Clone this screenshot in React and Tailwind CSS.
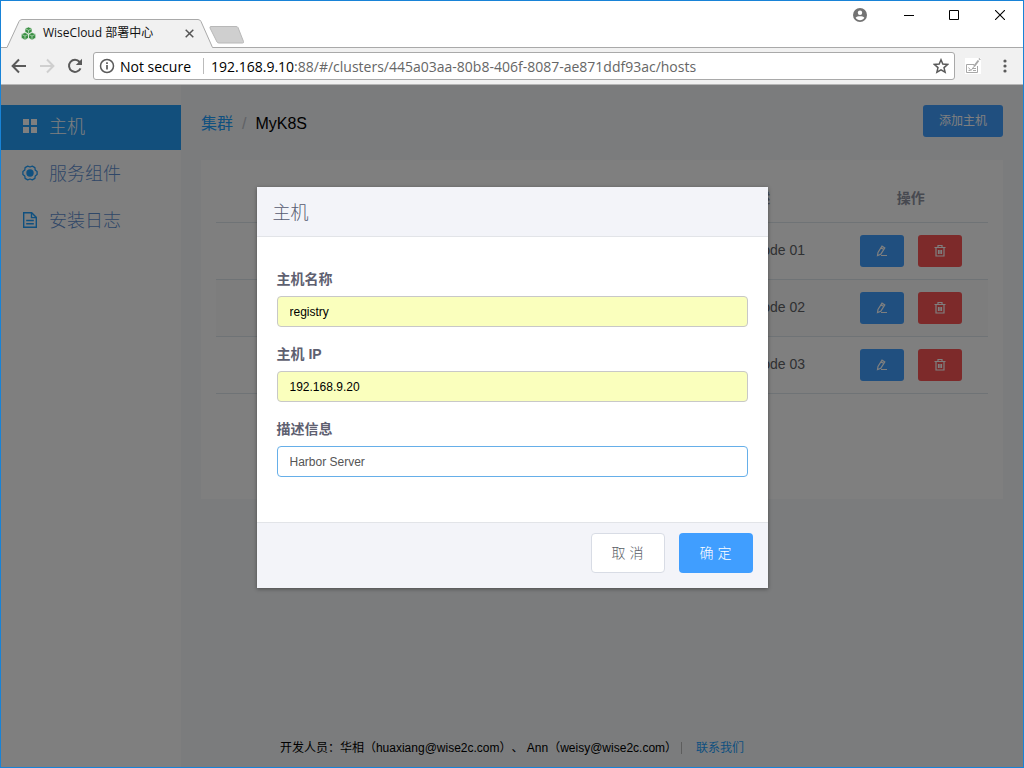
import React from "react";

const rows = [
  { name: "k8s-01", ip: "192.168.9.11", desc: "Master node 01" },
  { name: "k8s-02", ip: "192.168.9.12", desc: "Master node 02" },
  { name: "k8s-03", ip: "192.168.9.13", desc: "Master node 03" },
];

function GridIcon() {
  return (
    <svg className="mb-1" width="16" height="16" viewBox="0 0 16 16" fill="currentColor" aria-hidden="true">
      <path d="M1 1h6v6H1zM9 1h6v6H9zM1 9h6v6H1zM9 9h6v6H9z" />
    </svg>
  );
}

function ComponentIcon() {
  return (
    <svg className="mb-1" width="16" height="16" viewBox="0 0 16 16" fill="none" stroke="currentColor" strokeWidth="1.3" strokeLinejoin="round" aria-hidden="true">
      <path d="M15.1 6.5V9.500L13.200 11 12.900 13.400 10.300 14.900 8 14 5.700 14.900 3.100 13.400 2.800 11 .9 9.500V6.500L2.800 5 3.100 2.600 5.700 1.100 8 2 10.300 1.100 12.900 2.600 13.200 5z" />
      <circle cx="8" cy="8" r="3.700" fill="currentColor" stroke="none" />
    </svg>
  );
}

function DocIcon() {
  return (
    <svg className="mb-1" width="16" height="16" viewBox="0 0 16 16" fill="none" stroke="currentColor" strokeWidth="1.4" aria-hidden="true">
      <path d="M1.700.8h8l4.600 4.600v9.800H1.700z" />
      <path d="M9.500 1v4.600H14M4.200 8.500h7.600M4.200 11.700h7.600" />
    </svg>
  );
}

function EditIcon() {
  return (
    <svg width="12" height="12" viewBox="0 0 12 12" fill="none" stroke="currentColor" strokeWidth="1.2" aria-hidden="true">
      <path d="M1.500 10.500 2 7.500 6 1.200 8.800 3 4.800 9.200zM5 2.800 7.800 4.600M5 10.500h6" />
    </svg>
  );
}

function TrashIcon() {
  return (
    <svg width="12" height="12" viewBox="0 0 12 12" fill="none" stroke="currentColor" strokeWidth="1.2" aria-hidden="true">
      <path d="M.5 2.500h11M4 2.500v-2h4v2M2 2.500v8.500h8V2.500M4.500 5v4M6 5v4M7.500 5v4" />
    </svg>
  );
}

function BrowserChrome() {
  return (
    <header className="flex flex-col">
      <div className="flex h-[47px] justify-between border-b border-[#a9a9a9] bg-white">
        <div className="flex flex-1 items-end">
          <div className="relative flex h-7 w-[212px] items-center pl-5">
            <svg className="absolute left-0 top-0" width="212" height="29" viewBox="0 0 212 29" aria-hidden="true">
              <path d="M6 29V28.500L18 2.500Q19 .5 21 .5H197Q199 .5 200 2.500L211.500 28.500V29z" fill="#f1f1f1" />
              <path d="M0 28.500h6L18 2.500Q19 .5 21 .5H197Q199 .5 200 2.500L211.500 28.500" fill="none" stroke="#a9a9a9" />
            </svg>
            <svg className="relative" width="15" height="13" viewBox="0 0 15 13" aria-hidden="true">
              <g fill="#3a8f43" stroke="#f1f1f1" strokeWidth=".6">
                <path d="M7.500 0 11 1.500v3.500L7.500 7 4 5V1.500zM4 5.500 7.500 7v4L4 13 .3 11V7zM11 5.500 14.700 7v4L11 13 7.500 11V7z" />
                <path d="M4 1.600 7.500 3.300 11 1.600M.5 7.300 4 9l3.500-1.700L11 9l3.500-1.700M7.500 3.300V6M4 9v3M11 9v3" fill="none" stroke="#d9eeda" />
              </g>
            </svg>
            <span className="relative ml-[7px] flex-1 font-['Open_Sans','Noto_Sans_CJK_SC',sans-serif] text-[12px] text-[#111]">WiseCloud 部署中心</span>
            <button aria-label="关闭标签页" className="relative mr-4 flex size-4 items-center justify-center text-[#555]">
              <svg width="9" height="9" viewBox="0 0 9 9" stroke="currentColor" strokeWidth="1.500"><path d="m.7.700 7.600 7.600M8.300.7.700 8.300" /></svg>
            </button>
          </div>
          <button aria-label="新标签页" className="-ml-1 mb-[3px]">
            <svg width="36" height="18" viewBox="0 0 36 18"><path d="M2 .5h25q1.500 0 2 1l5.500 14q.5 1.500-1 1.500H10q-1.500 0-2-1L1 2Q.5.500 2 .5z" fill="#cfcfcf" stroke="#b8b8b8" /></svg>
          </button>
        </div>
        <div className="flex h-7 items-center text-black">
          <button aria-label="用户" className="mr-[29px] flex w-8 justify-center">
            <svg width="14" height="14" viewBox="0 0 14 14"><circle cx="7" cy="7" r="7" fill="#737373" /><circle cx="7" cy="4.800" r="2.200" fill="#fff" /><path d="M2.600 9.800C3.500 8.600 5.200 8.200 7 8.200s3.500.4 4.400 1.600C10.500 11.400 8.900 12.200 7 12.200S3.500 11.400 2.600 9.800z" fill="#fff" /></svg>
          </button>
          <button aria-label="最小化" className="flex w-[7px] justify-center">
            <svg className="shrink-0" width="10" height="10" viewBox="0 0 10 10"><path d="M0 5.500h10" stroke="currentColor" /></svg>
          </button>
          <button aria-label="最大化" className="ml-[19px] flex w-[46px] justify-center">
            <svg width="10" height="10" viewBox="0 0 10 10"><path d="M.5.500h9v9h-9z" fill="none" stroke="currentColor" /></svg>
          </button>
          <button aria-label="关闭" className="flex w-[46px] justify-center">
            <svg width="10" height="10" viewBox="0 0 10 10"><path d="m0 0 10 10M10 0 0 10" stroke="currentColor" strokeWidth="1.100" /></svg>
          </button>
        </div>
      </div>
      <div className="flex h-[37px] items-center border-b border-[#b6b6b6] bg-[#f1f1f1] pl-[10px] pr-2 font-['Open_Sans',sans-serif] text-[#5a5a5a]">
        <button aria-label="后退" className="w-7">
          <svg width="16" height="16" viewBox="0 0 16 16" fill="none" stroke="currentColor" strokeWidth="2"><path d="M15 8H2M8 1.500 1.600 8 8 14.500" /></svg>
        </button>
        <button aria-label="前进" className="w-7 text-[#cfcfcf]">
          <svg width="16" height="16" viewBox="0 0 16 16" fill="none" stroke="currentColor" strokeWidth="2"><path d="M1 8h13M8 1.500 14.400 8 8 14.500" /></svg>
        </button>
        <button aria-label="刷新" className="w-[26px]">
          <svg width="16" height="16" viewBox="0 0 16 16" fill="none" stroke="currentColor" strokeWidth="2"><path d="M13.500 10.300A6 6 0 1 1 12.600 4L14 5.500" /><path d="M15 .8v6.200H8.800z" fill="currentColor" stroke="none" /></svg>
        </button>
        <div className="flex h-7 flex-1 items-center rounded-[3px] border border-[#a9a9a9] bg-white px-[5px] text-[14px]">
          <svg width="16" height="16" viewBox="0 0 16 16" fill="none" stroke="currentColor" strokeWidth="1.500"><circle cx="8" cy="8" r="6.500" /><path d="M8 7v4.500M8 4.200V6" strokeWidth="1.700" /></svg>
          <span className="ml-[5px] whitespace-nowrap text-black">Not secure</span>
          <span className="ml-3 mr-[7px] h-4 w-px bg-[#bbb]" />
          <label htmlFor="url" className="whitespace-nowrap text-black">192.168.9.10</label>
          <input id="url" defaultValue=":88/#/clusters/445a03aa-80b8-406f-8087-ae871ddf93ac/hosts" className="h-5 min-w-0 flex-1 text-[#666] outline-none" />
          <button aria-label="收藏">
            <svg width="16" height="16" viewBox="0 0 16 16" fill="none" stroke="currentColor" strokeWidth="1.500"><path d="m8 1.800 1.800 4.300 4.700.4L11 9.600l1.100 4.600L8 11.800l-4.100 2.400L5 9.600 1.500 6.500l4.700-.4z" /></svg>
          </button>
        </div>
        <button aria-label="扩展程序" className="ml-[10px] w-4 bg-white text-[#a8a8a8]">
          <svg width="16" height="16" viewBox="0 0 16 16" fill="none" stroke="currentColor"><path d="M9 6.500H1.500v8h11V8M3.500 9.500l2.500 3 3-4M3.500 12.500h2M8 12.500h3M8 10.500h3" /><path d="M9 8.500 13.500 2.500M14.200 1.600 15 .6" strokeWidth="2" /></svg>
        </button>
        <button aria-label="更多" className="ml-[14px] flex w-5 justify-center">
          <svg width="4" height="14" viewBox="0 0 4 14" fill="currentColor"><circle cx="2" cy="2" r="1.600" /><circle cx="2" cy="7" r="1.600" /><circle cx="2" cy="12" r="1.600" /></svg>
        </button>
      </div>
    </header>
  );
}

function Sidebar() {
  return (
    <nav className="flex w-[180px] shrink-0 flex-col gap-[2px] bg-white pt-5 text-[18px] font-light text-[#20a0ff]">
      <a href="#hosts" className="flex h-[45px] items-center gap-[11px] bg-[#249ef8] pl-[21px] text-white"><GridIcon />主机</a>
      <a href="#components" className="flex h-[45px] items-center gap-[11px] pl-[21px]"><ComponentIcon /><span className="text-[#5f8fd0]">服务组件</span></a>
      <a href="#logs" className="flex h-[45px] items-center gap-[11px] pl-[21px]"><DocIcon /><span className="text-[#5f8fd0]">安装日志</span></a>
    </nav>
  );
}

function HostTable() {
  return (
    <table className="w-full table-fixed border-collapse text-center text-[14px] text-[#606266]">
      <thead>
        <tr className="h-[47px] border-b border-[#dfe6ec] text-[#8f92a0]">
          {["序号", "主机名称", "主机 IP", "描述", "操作"].map((h) => (
            <th key={h} className="font-bold">{h}</th>
          ))}
        </tr>
      </thead>
      <tbody>
        {rows.map((r, i) => (
          <tr key={r.name} className="h-[57px] border-b border-[#dfe6ec] even:bg-[#fafafa]">
            <td>{i + 1}</td>
            <td>{r.name}</td>
            <td>{r.ip}</td>
            <td>{r.desc}</td>
            <td>
              <div className="flex justify-center gap-[14px] text-white">
                <button aria-label="编辑" className="flex h-8 w-11 items-center justify-center rounded-[3px] bg-[#409eff]"><EditIcon /></button>
                <button aria-label="删除" className="flex h-8 w-11 items-center justify-center rounded-[3px] bg-[#fa5555]"><TrashIcon /></button>
              </div>
            </td>
          </tr>
        ))}
      </tbody>
    </table>
  );
}

const inputBase = "h-[31px] w-full rounded-[4px] border px-3 text-[12px] outline-none";

function HostDialog() {
  return (
    <div className="absolute inset-0 flex items-start justify-center bg-black/50 pt-[102px]">
      <form role="dialog" aria-labelledby="dialog-title" className="flex w-1/2 min-w-[320px] flex-col bg-white shadow-[0_1px_4px_rgba(0,0,0,0.4)]">
        <h2 id="dialog-title" className="flex h-[50px] items-center border-b border-[#e2e4e8] bg-[#f3f4f9] pt-1 pl-4 text-[18px] font-light text-[#555a70]">主机</h2>
        <div className="flex flex-col gap-[15px] px-5 pt-[30px] pb-[45px] text-[14px] text-[#5e6070]">
          <div className="flex flex-col gap-[5px]">
            <label htmlFor="name" className="h-6 font-bold leading-6">主机名称</label>
            <input id="name" defaultValue="registry" className={`${inputBase} border-[#c8c8c8] bg-[#faffbd] text-black`} />
          </div>
          <div className="flex flex-col gap-[5px]">
            <label htmlFor="ip" className="h-6 font-bold leading-6">主机 IP</label>
            <input id="ip" defaultValue="192.168.9.20" className={`${inputBase} border-[#c8c8c8] bg-[#faffbd] text-black`} />
          </div>
          <div className="flex flex-col gap-[5px]">
            <label htmlFor="desc" className="h-6 font-bold leading-6">描述信息</label>
            <input id="desc" defaultValue="Harbor Server" className={`${inputBase} border-[#66afe9] bg-white text-[#555]`} />
          </div>
        </div>
        <div className="flex h-[66px] items-start justify-end gap-[14px] border-t border-[#e2e4e8] bg-[#f3f4f9] px-[15px] pt-[10px] text-[14px] font-light">
          <button type="button" className="h-10 w-[74px] rounded-[4px] border border-[#d8dce5] bg-white text-[#5a5e66]">取 消</button>
          <button type="button" className="h-10 w-[74px] rounded-[4px] bg-[#409eff] text-white">确 定</button>
        </div>
      </form>
    </div>
  );
}

export default function App() {
  return (
    <div className="flex min-h-screen flex-col border border-[#1883d7] font-['Liberation_Sans','Noto_Sans_CJK_SC',sans-serif]">
      <BrowserChrome />
      <div className="relative flex flex-1">
        <Sidebar />
        <main className="flex flex-1 flex-col bg-[#f6f8fa] px-5 pt-5">
          <div className="flex items-start justify-between">
            <div className="flex h-[38px] items-center gap-[9px] text-[16px] text-black">
              <a href="#clusters" className="text-[#20a0ff]">集群</a>
              <span className="text-[#c0c4cc]">/</span>
              <span>MyK8S</span>
            </div>
            <button className="h-8 w-20 rounded-[3px] bg-[#409eff] text-[12px] text-white">添加主机</button>
          </div>
          <section className="mt-[17px] bg-white px-[15px] pt-[15px] pb-[105px]">
            <HostTable />
          </section>
        </main>
        <footer className="absolute bottom-[10px] left-0 flex w-full items-center justify-center text-[12px] text-black">
          <span className="[text-spacing-trim:space-all]">开发人员：华相（huaxiang@wise2c.com）、 Ann（weisy@wise2c.com）</span>
          <span className="mr-[14px] ml-1 h-3 w-px bg-[#bbb]" />
          <a href="#contact" className="text-[#20a0ff]">联系我们</a>
        </footer>
        <HostDialog />
      </div>
    </div>
  );
}
